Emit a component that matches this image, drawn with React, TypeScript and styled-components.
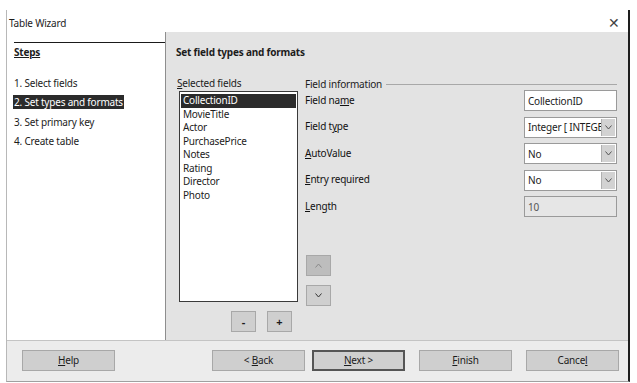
import { FC } from "react";
import styled, { createGlobalStyle, css } from "styled-components";

const GlobalStyle = createGlobalStyle`
  html, body {
    margin: 0;
    padding: 0;
    background: #ffffff;
  }
  body {
    font-family: "Noto Sans", "Open Sans", sans-serif;
    font-size: 10px;
    letter-spacing: -0.2px;
    color: #1c1c1c;
  }
`;

const Page = styled.div`
  width: 637px;
  height: 383px;
  padding: 10px 7px 0 6px;
  box-sizing: border-box;
  background: #ffffff;
`;

const Frame = styled.div`
  height: 372px;
  display: flex;
  flex-direction: column;
  border-left: 1px solid #b8b8b8;
  border-right: 2px solid #1e1e1e;
  border-bottom: 1px solid #a0a0a0;
  box-sizing: border-box;
`;

const TitleBar = styled.div`
  height: 22px;
  display: flex;
  align-items: center;
  justify-content: space-between;
  padding: 4px 8px 0 2px;
  box-sizing: border-box;
  background: #ffffff;
`;

const Title = styled.span`
  font-size: 10px;
`;

const Close = styled.span`
  font-size: 14px;
  color: #444;
  line-height: 1;
`;

const Body = styled.div`
  flex: 1;
  display: flex;
  min-height: 0;
`;

const StepsPane = styled.div`
  width: 159px;
  background: #ffffff;
  padding: 10px 0 0 7px;
  box-sizing: border-box;
  border-right: 1px solid #8e8e8e;
`;

const StepsHeader = styled.div`
  border-top: 1px solid #1a1a1a;
  padding-top: 2px;
  font-weight: 700;
  text-decoration: underline;
  line-height: 14px;
  height: 34px;
  box-sizing: border-box;
`;

const StepList = styled.div`
  display: flex;
  flex-direction: column;
  gap: 5.3px;
`;

const Step = styled.div<{ $active?: boolean }>`
  align-self: flex-start;
  line-height: 14px;
  padding: 0 1px;
  margin-left: -1px;
  ${(p) =>
    p.$active &&
    css`
      background: #2b2b2b;
      color: #ffffff;
    `}
`;

const MainPane = styled.div`
  flex: 1;
  background: #e3e3e3;
  padding: 13px 11px 0 10px;
  box-sizing: border-box;
  display: flex;
  flex-direction: column;
`;

const PageTitle = styled.div`
  font-weight: 700;
  line-height: 14px;
  height: 31px;
`;

const Columns = styled.div`
  display: flex;
  gap: 7px;
`;

const ListColumn = styled.div`
  width: 121px;
  display: flex;
  flex-direction: column;
  padding-left: 1px;
`;

const Label = styled.div`
  line-height: 14px;
  height: 15px;
`;

const ListBox = styled.div`
  margin-left: 2px;
  height: 211px;
  background: #ffffff;
  border: 1px solid #3a3a3a;
  box-sizing: border-box;
  padding: 2px 1px;
  display: flex;
  flex-direction: column;
`;

const ListItem = styled.div<{ $selected?: boolean }>`
  line-height: 13.5px;
  padding-left: 2px;
  ${(p) =>
    p.$selected &&
    css`
      background: #2b2b2b;
      color: #ffffff;
    `}
`;

const ListButtons = styled.div`
  display: flex;
  gap: 11px;
  padding: 9px 0 0 54px;
`;

const SmallButton = styled.button<{ $disabled?: boolean }>`
  width: 25px;
  height: 21px;
  padding: 0;
  border: 1px solid #a8a8a8;
  background: ${(p) => (p.$disabled ? "#bdbdbd" : "#cfcfcf")};
  color: ${(p) => (p.$disabled ? "#8c8c8c" : "#1c1c1c")};
  font-family: inherit;
  font-size: 11px;
  font-weight: 700;
  display: flex;
  align-items: center;
  justify-content: center;
`;

const InfoColumn = styled.div`
  flex: 1;
  display: flex;
  flex-direction: column;
`;

const Legend = styled.div`
  display: flex;
  align-items: center;
  gap: 4px;
  line-height: 14px;
  height: 15px;
  &::after {
    content: "";
    flex: 1;
    border-top: 1px solid #a8a8a8;
    margin-top: 1px;
  }
`;

const FieldRows = styled.div`
  display: flex;
  flex-direction: column;
  gap: 5.6px;
  margin-top: -1px;
`;

const FieldRow = styled.div`
  display: flex;
  align-items: center;
  justify-content: space-between;
  height: 21px;
`;

const FieldLabel = styled.span`
  color: #111;
  margin-top: -2px;
`;

const Input = styled.div<{ $disabled?: boolean }>`
  width: 93px;
  height: 21px;
  box-sizing: border-box;
  border: 1px solid #9a9a9a;
  background: ${(p) => (p.$disabled ? "#e6e6e6" : "#ffffff")};
  color: ${(p) => (p.$disabled ? "#555" : "#1c1c1c")};
  padding-left: 3px;
  display: flex;
  align-items: center;
  overflow: hidden;
  white-space: nowrap;
`;

const SelectValue = styled.span`
  flex: 1;
  min-width: 0;
  overflow: hidden;
  white-space: nowrap;
`;

const Arrow = styled.span`
  width: 13px;
  height: 17px;
  margin-right: 1px;
  background: #d2d2d2;
  border-left: 1px solid #b0b0b0;
  display: flex;
  align-items: center;
  justify-content: center;
  flex: none;
`;

const MoveButtons = styled.div`
  display: flex;
  flex-direction: column;
  gap: 9px;
  padding: 38px 0 0 1px;
`;

const Footer = styled.div`
  height: 41px;
  background: #ececec;
  border-top: 1px solid #c4c4c4;
  box-sizing: border-box;
  display: flex;
  align-items: center;
  padding: 0 0 2px 15px;
`;

const Button = styled.button<{ $default?: boolean }>`
  width: 93px;
  height: 21px;
  padding: 0;
  box-sizing: border-box;
  font-family: inherit;
  font-size: 10px;
  letter-spacing: -0.2px;
  color: #1c1c1c;
  background: #cfcfcf;
  border: ${(p) => (p.$default ? "2px solid #555" : "1px solid #a8a8a8")};
`;

const FooterSpacer = styled.div`
  flex: 1;
`;

const FooterGroup = styled.div`
  display: flex;
  gap: 14px;
  margin-right: 9px;
  & > :first-child {
    margin-right: -7px;
  }
`;

const Chevron: FC<{ up?: boolean; color?: string }> = ({ up, color = "#555" }) => (
  <svg width="7" height="5" viewBox="0 0 7 5">
    <path
      d={up ? "M0.5 4.5 L3.5 1 L6.5 4.5" : "M0.5 0.5 L3.5 4 L6.5 0.5"}
      fill="none"
      stroke={color}
      strokeWidth="1"
    />
  </svg>
);

const U: FC<{ children: string }> = ({ children }) => <u>{children}</u>;

const fields = [
  "CollectionID",
  "MovieTitle",
  "Actor",
  "PurchasePrice",
  "Notes",
  "Rating",
  "Director",
  "Photo",
];

const steps = [
  "1. Select fields",
  "2. Set types and formats",
  "3. Set primary key",
  "4. Create table",
];

const Select: FC<{ value: string }> = ({ value }) => (
  <Input>
    <SelectValue>{value}</SelectValue>
    <Arrow>
      <Chevron />
    </Arrow>
  </Input>
);

export default function App() {
  return (
    <>
      <GlobalStyle />
      <Page>
        <Frame>
          <TitleBar>
            <Title>Table Wizard</Title>
            <Close>✕</Close>
          </TitleBar>
          <Body>
            <StepsPane>
              <StepsHeader>Steps</StepsHeader>
              <StepList>
                {steps.map((s, i) => (
                  <Step key={s} $active={i === 1}>
                    {s}
                  </Step>
                ))}
              </StepList>
            </StepsPane>
            <MainPane>
              <PageTitle>Set field types and formats</PageTitle>
              <Columns>
                <ListColumn>
                  <Label>
                    <U>S</U>elected fields
                  </Label>
                  <ListBox>
                    {fields.map((f, i) => (
                      <ListItem key={f} $selected={i === 0}>
                        {f}
                      </ListItem>
                    ))}
                  </ListBox>
                  <ListButtons>
                    <SmallButton>-</SmallButton>
                    <SmallButton>+</SmallButton>
                  </ListButtons>
                </ListColumn>
                <InfoColumn>
                  <Legend>Field information</Legend>
                  <FieldRows>
                    <FieldRow>
                      <FieldLabel>
                        Field na<U>m</U>e
                      </FieldLabel>
                      <Input>CollectionID</Input>
                    </FieldRow>
                    <FieldRow>
                      <FieldLabel>
                        Field t<U>y</U>pe
                      </FieldLabel>
                      <Select value="Integer [ INTEGER ]" />
                    </FieldRow>
                    <FieldRow>
                      <FieldLabel>
                        <U>A</U>utoValue
                      </FieldLabel>
                      <Select value="No" />
                    </FieldRow>
                    <FieldRow>
                      <FieldLabel>
                        <U>E</U>ntry required
                      </FieldLabel>
                      <Select value="No" />
                    </FieldRow>
                    <FieldRow>
                      <FieldLabel>
                        <U>L</U>ength
                      </FieldLabel>
                      <Input $disabled>10</Input>
                    </FieldRow>
                  </FieldRows>
                  <MoveButtons>
                    <SmallButton $disabled>
                      <Chevron up color="#8a8a8a" />
                    </SmallButton>
                    <SmallButton>
                      <Chevron color="#333" />
                    </SmallButton>
                  </MoveButtons>
                </InfoColumn>
              </Columns>
            </MainPane>
          </Body>
          <Footer>
            <Button>
              <U>H</U>elp
            </Button>
            <FooterSpacer />
            <FooterGroup>
              <Button>
                &lt; <U>B</U>ack
              </Button>
              <Button $default>
                <U>N</U>ext &gt;
              </Button>
              <Button>
                <U>F</U>inish
              </Button>
              <Button>
                Cance<U>l</U>
              </Button>
            </FooterGroup>
          </Footer>
        </Frame>
      </Page>
    </>
  );
}
